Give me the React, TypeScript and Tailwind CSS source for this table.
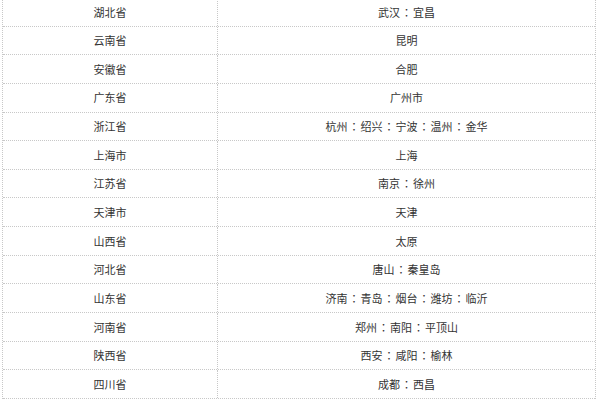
import React from "react";

const rows: [string, string][] = [
  ["湖北省", "武汉：宜昌"],
  ["云南省", "昆明"],
  ["安徽省", "合肥"],
  ["广东省", "广州市"],
  ["浙江省", "杭州：绍兴：宁波：温州：金华"],
  ["上海市", "上海"],
  ["江苏省", "南京：徐州"],
  ["天津市", "天津"],
  ["山西省", "太原"],
  ["河北省", "唐山：秦皇岛"],
  ["山东省", "济南：青岛：烟台：潍坊：临沂"],
  ["河南省", "郑州：南阳：平顶山"],
  ["陕西省", "西安：咸阳：榆林"],
  ["四川省", "成都：西昌"],
];

export default function App() {
  return (
    <div
      className="w-[600px] h-[400px] overflow-hidden bg-white text-[#333333] text-[11px] [text-spacing-trim:space-all]"
      style={{ fontFamily: '"Noto Sans CJK SC", "Noto Sans", sans-serif' }}
    >
      <div className="ml-[2px] mt-[-2px] w-[594px] border-x border-dotted border-[#c8c8c8]">
        {rows.map(([a, b], i) => (
          <div
            key={i}
            className="flex h-[28.65px] items-center border-b border-dotted border-[#c8c8c8]"
          >
            <div className="w-[215px] h-full flex items-center justify-center border-r border-dotted border-[#c8c8c8]">
              {a}
            </div>
            <div className="flex-1 h-full flex items-center justify-center">
              {b.split("：").map((part, j) => (
                <React.Fragment key={j}>
                  {j > 0 && (
                    <span
                      className="inline-block w-[13px] text-center overflow-visible"
                      style={{ fontFamily: '"Noto Sans CJK TC", sans-serif' }}
                    >
                      ：
                    </span>
                  )}
                  {part}
                </React.Fragment>
              ))}
            </div>
          </div>
        ))}
      </div>
    </div>
  );
}
